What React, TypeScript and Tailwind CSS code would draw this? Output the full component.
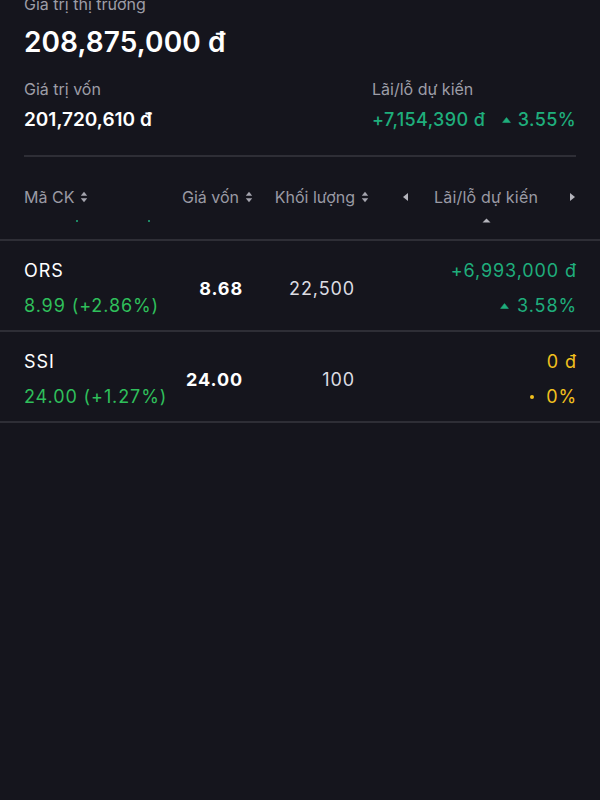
import React from 'react';

const SortIcon = () => (
  <svg width="8" height="12" viewBox="0 0 8 12" className="inline-block ml-[6px] shrink-0">
    <path d="M4 0.8 L7.2 4.8 H0.8 Z" fill="#a4a4ae" />
    <path d="M4 11.2 L7.2 7.2 H0.8 Z" fill="#a4a4ae" />
  </svg>
);

const Caret = ({ dir }: { dir: 'left' | 'right' }) => (
  <svg width="7" height="10" viewBox="0 0 7 10" className="shrink-0">
    {dir === 'left' ? <path d="M1 5 L6 1 V9 Z" fill="#b4b4bc" /> : <path d="M6 5 L1 1 V9 Z" fill="#b4b4bc" />}
  </svg>
);

const UpTri = ({ color }: { color: string }) => (
  <svg width="9" height="6" viewBox="0 0 9 6" className="shrink-0">
    <path d="M4.5 0.6 L8.4 5.4 H0.6 Z" fill={color} strokeLinejoin="round" stroke={color} strokeWidth="0.6" />
  </svg>
);

type Row = {
  code: string;
  price: string;
  cost: string;
  qty: string;
  pnl: string;
  pct: string;
  flat?: boolean;
};

const rows: Row[] = [
  { code: 'ORS', price: '8.99 (+2.86%)', cost: '8.68', qty: '22,500', pnl: '+6,993,000 đ', pct: '3.58%' },
  { code: 'SSI', price: '24.00 (+1.27%)', cost: '24.00', qty: '100', pnl: '0 đ', pct: '0%', flat: true },
];

export default function App() {
  return (
    <div className="w-[600px] h-[800px] overflow-hidden bg-[#15151d] font-['Inter',sans-serif] antialiased">
      {/* summary */}
      <div className="px-6 -mt-[6px]">
        <div className="text-[16px] leading-[20px] text-[#9d9da7]">Giá trị thị trường</div>
        <div className="mt-[10px] text-[28px] leading-[36px] font-semibold text-white tracking-[0.1px]">208,875,000 đ</div>
        <div className="mt-[19px] flex justify-between">
          <div>
            <div className="text-[16px] leading-[20px] text-[#9d9da7]">Giá trị vốn</div>
            <div className="mt-[9px] text-[19px] leading-[24px] font-semibold text-white">201,720,610 đ</div>
          </div>
          <div className="w-[204px]">
            <div className="text-[16px] leading-[20px] text-[#9d9da7]">Lãi/lỗ dự kiến</div>
            <div className="mt-[9px] flex items-center text-[18px] leading-[24px] font-medium text-[#1fae7c] tracking-[0.4px]">
              <span>+7,154,390 đ</span>
              <span className="ml-auto flex items-center gap-[7px]">
                <UpTri color="#1fae7c" />
                3.55%
              </span>
            </div>
          </div>
        </div>
        <div className="mt-[23px] h-[2px] bg-[#2e2e36]" />
      </div>

      {/* header */}
      <div className="flex h-[82px] px-6 pt-[30px] text-[16px] leading-[20px] text-[#9a9aa4]">
        <div className="w-[141px] flex flex-col">
          <div className="flex items-center">Mã CK<SortIcon /></div>
          <div className="mt-[10px] flex h-[8px] items-center">
            <span className="ml-[52px] w-[2px] h-[2px] rounded-full bg-[#1fae7c]" />
            <span className="ml-[70px] w-[2px] h-[2px] rounded-full bg-[#1fae7c]" />
          </div>
        </div>
        <div className="w-[88px] flex justify-end">
          <div className="flex items-center h-[20px]">Giá vốn<SortIcon /></div>
        </div>
        <div className="w-[117px] flex justify-end">
          <div className="flex items-center h-[20px] pr-[1px]">Khối lượng<SortIcon /></div>
        </div>
        <div className="flex-1 flex flex-col">
          <div className="flex items-center h-[20px] pl-[32px]">
            <Caret dir="left" />
            <span className="ml-[25px] tracking-[0.2px]">Lãi/lỗ dự kiến</span>
            <span className="ml-auto"><Caret dir="right" /></span>
          </div>
          <div className="mt-[11px] pl-[112px]">
            <svg width="9" height="5" viewBox="0 0 9 5"><path d="M4.5 0.5 L8.5 4.5 H0.5 Z" fill="#b4b4bc" /></svg>
          </div>
        </div>
      </div>
      <div className="h-[2px] bg-[#2e2e36]" />

      {/* rows */}
      {rows.map((r) => (
        <React.Fragment key={r.code}>
          <div className="flex items-center px-6 pt-[17px] pb-[11px] text-[18px] leading-[26px] tracking-[0.9px]">
            <div className="w-[141px] shrink-0 flex flex-col gap-[9px] whitespace-nowrap">
              <div className="text-white">{r.code}</div>
              <div className="text-[#2fbf5b]">{r.price}</div>
            </div>
            <div className="w-[88px] shrink-0 pr-[10px] text-right font-bold text-white">{r.cost}</div>
            <div className="w-[117px] shrink-0 pr-[15px] text-right text-[#dcdce2]">{r.qty}</div>
            <div className={`flex-1 flex flex-col items-end gap-[9px] -mr-[1px] whitespace-nowrap ${r.flat ? 'text-[#f2c01d]' : 'text-[#1fae7c]'}`}>
              <div>{r.pnl}</div>
              <div className="flex items-center gap-[8px]">
                {r.flat ? <span className="w-[4px] h-[4px] rounded-full bg-[#f2c01d] mr-[4px]" /> : <UpTri color="#1fae7c" />}
                {r.pct}
              </div>
            </div>
          </div>
          <div className="h-[2px] bg-[#2e2e36]" />
        </React.Fragment>
      ))}
    </div>
  );
}
